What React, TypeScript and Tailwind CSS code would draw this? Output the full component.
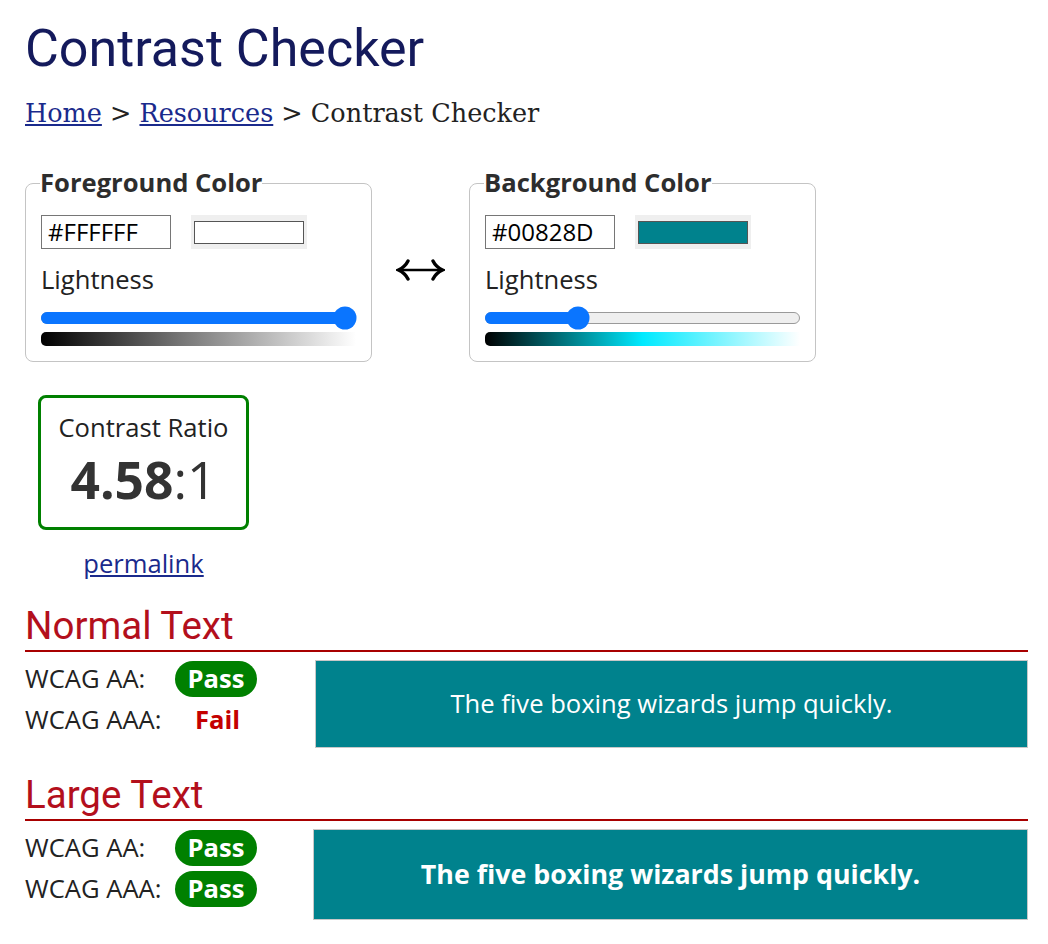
const sans = "font-['Open_Sans',sans-serif]";

function Slider({ pct, gradient }: { pct: number; gradient: string }) {
  return (
    <div className="mt-[14px] w-[315px]">
      <div className="relative h-[14px]">
        <div className="absolute inset-y-[1px] left-0 right-0 rounded-full border border-[#9a9a9a] bg-[#efefef]"></div>
        <div
          className="absolute inset-y-[1px] left-0 rounded-full bg-[#0a75ff]"
          style={{ width: `${pct}%` }}
        ></div>
        <div
          className="absolute top-1/2 h-[23px] w-[23px] -translate-x-1/2 -translate-y-1/2 rounded-full bg-[#0a75ff]"
          style={{ left: `calc(${pct}% - ${pct * 0.22}px + 11px)` }}
        ></div>
      </div>
      <div className="mt-[7px] h-[14px] rounded-l-[5px]" style={{ background: gradient }}></div>
    </div>
  );
}

function ColorBox({
  title,
  hex,
  swatch,
  pct,
  gradient,
}: {
  title: string;
  hex: string;
  swatch: string;
  pct: number;
  gradient: string;
}) {
  return (
    <fieldset className="w-[346px] rounded-[8px] border border-[#c4c4c4] px-[15px] pb-[15px] pt-[17px]">
      <legend className="-ml-[1px] px-0 text-[25.6px] font-bold leading-[30px] text-[#2d2d2d]">{title}</legend>
      <div className="flex items-center gap-[20px]">
        <div className="flex h-[34px] w-[130px] items-center border border-[#767676] px-[6px] text-[24px] leading-none text-black">
          {hex}
        </div>
        <div className="flex h-[34px] w-[116px] items-center justify-center bg-[#efefef]">
          <div className="h-[23px] w-[110px] border border-[#555]" style={{ background: swatch }}></div>
        </div>
      </div>
      <div className="mt-[14px] text-[25.6px] leading-[34px] text-[#222]">Lightness</div>
      <Slider pct={pct} gradient={gradient} />
    </fieldset>
  );
}

function SwapArrow() {
  return (
    <svg width="49" height="24" viewBox="0 0 49 24" className="mt-[10px] shrink-0" fill="none">
      <path d="M4 12 H45" stroke="#000" strokeWidth="2.4" />
      <path d="M12 3 Q9 9 2.5 12 Q9 15 12 21" stroke="#000" strokeWidth="3.4" strokeLinecap="round" />
      <path d="M37 3 Q40 9 46.5 12 Q40 15 37 21" stroke="#000" strokeWidth="3.4" strokeLinecap="round" />
    </svg>
  );
}

function Pass() {
  return (
    <span className="inline-flex h-[36px] w-[82px] items-center justify-center rounded-full bg-[#008000] text-[25.6px] font-bold leading-none text-white">
      Pass
    </span>
  );
}

function Section({
  title,
  aaa,
  large,
}: {
  title: string;
  aaa: 'pass' | 'fail';
  large?: boolean;
}) {
  return (
    <section className={large ? 'mt-[25px]' : 'mt-[20px]'}>
      <h2 className="font-['Roboto',sans-serif] text-[38.5px] leading-[44px] text-[#b30f1c]">{title}</h2>
      <div className="mt-[2px] h-[2px] bg-[#a80000]"></div>
      <div className={`mt-[8px] flex items-start ${large ? 'gap-[56px]' : 'gap-[58px]'}`}>
        <div className="grid w-[232px] grid-cols-[150px_82px] items-center gap-y-[5px] pt-[1px] text-[25.6px] leading-[36px] text-[#222]">
          <div>WCAG AA:</div>
          <Pass />
          <div>WCAG AAA:</div>
          {aaa === 'pass' ? (
            <Pass />
          ) : (
            <span className="pl-[20px] font-bold text-[#c40000]">Fail</span>
          )}
        </div>
        <div
          className={`flex flex-1 items-center justify-center border border-[#c8c8c8] bg-[#00828D] text-white ${
            large ? 'h-[91px] text-[26.8px] font-bold' : 'h-[88px] text-[25.6px]'
          }`}
        >
          The five boxing wizards jump quickly.
        </div>
      </div>
    </section>
  );
}

export default function App() {
  return (
    <div className={`min-h-screen bg-white pl-[25px] pr-[20px] pt-[20px] ${sans}`}>
      <h1 className="font-['Roboto',sans-serif] text-[52px] leading-[58px] text-[#141a5c]">Contrast Checker</h1>

      {/* Breadcrumb */}
      <nav className="mt-[20px] font-['DejaVu_Serif',serif] text-[25.5px] leading-[30px] text-[#222]">
        <a href="#" className="text-[#1a2a8c] underline">Home</a>
        {' > '}
        <a href="#" className="text-[#1a2a8c] underline">Resources</a>
        {' > Contrast Checker'}
      </nav>

      {/* Color pickers */}
      <div className="mt-[40px] flex items-center gap-[24px]">
        <ColorBox
          title="Foreground Color"
          hex="#FFFFFF"
          swatch="#FFFFFF"
          pct={100}
          gradient="linear-gradient(to right, #000, #777 45%, #fff)"
        />
        <SwapArrow />
        <ColorBox
          title="Background Color"
          hex="#00828D"
          swatch="#00828D"
          pct={28}
          gradient="linear-gradient(to right, #000, #00828D 28%, #00eaff 50%, #fff)"
        />
      </div>

      {/* Ratio */}
      <div className="ml-[13px] mt-[33px] w-[211px]">
        <div className="flex h-[135px] flex-col items-center rounded-[8px] border-[3px] border-[#008000] pt-[13px] text-[#222]">
          <div className="text-[25.6px] leading-[34px]">Contrast Ratio</div>
          <div className="mt-[6px] text-[51.5px] leading-[56px] text-[#333]">
            <span className="font-bold">4.58</span>:1
          </div>
        </div>
        <div className="mt-[17px] text-center leading-[34px]">
          <a href="#" className="text-[25.6px] text-[#1a2a8c] underline">permalink</a>
        </div>
      </div>

      <Section title="Normal Text" aaa="fail" />
      <Section title="Large Text" aaa="pass" large />
    </div>
  );
}
